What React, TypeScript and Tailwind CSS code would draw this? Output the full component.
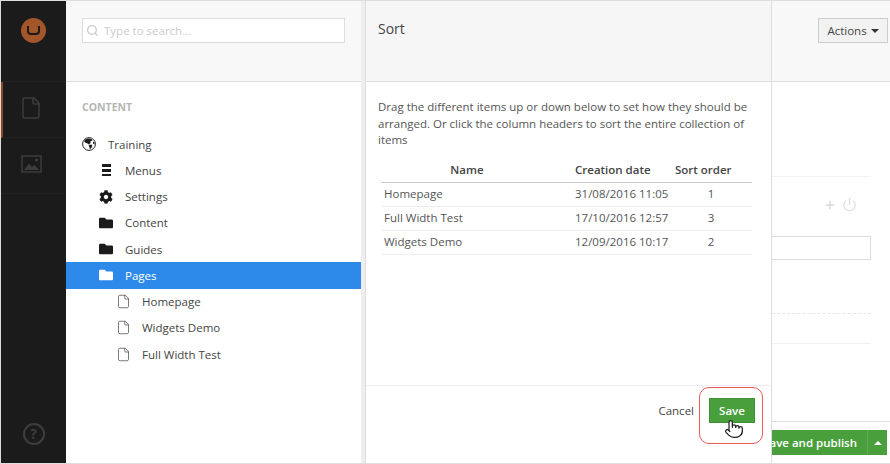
import { File, Pointer, Power, Plus, Search } from 'lucide-react';
import { FaCog, FaFolder } from 'react-icons/fa';

const ROWS = [
  { name: 'Homepage', date: '31/08/2016 11:05', order: 1 },
  { name: 'Full Width Test', date: '17/10/2016 12:57', order: 3 },
  { name: 'Widgets Demo', date: '12/09/2016 10:17', order: 2 },
];

function MenuIcon() {
  return (
    <span className="flex h-[12px] w-[9px] flex-col justify-between">
      <span className="h-[2.5px] bg-[#1b1b1b]" />
      <span className="h-[2.5px] bg-[#1b1b1b]" />
      <span className="h-[2.5px] bg-[#1b1b1b]" />
    </span>
  );
}

function GlobeIcon() {
  return (
    <svg width="14" height="14" viewBox="0 0 14 14">
      <circle cx="7" cy="7" r="6.4" fill="none" stroke="#222" strokeWidth="1" />
      <path d="M3 2.6 6.2 1.6 9.6 2 10.4 3.4 8.4 4.2 8.6 6 6.6 7.6 5.6 6.6 3.4 5.8 2.2 4.4Z" fill="#1b1b1b" />
      <path d="M6.6 8 9.4 7.6 10.4 9 9 11.6 7.8 12 7.4 10Z" fill="#1b1b1b" />
      <path d="M11 4.6 12.6 5.4 12.4 7.4 11 6.6Z" fill="#1b1b1b" />
    </svg>
  );
}

function PictureIcon() {
  return (
    <svg width="21" height="18" viewBox="0 0 21 18" fill="none">
      <rect x="1" y="1" width="19" height="16" stroke="#3d3d3d" strokeWidth="1.5" />
      <path d="M3 15 8 8.5 11 12 13.5 10 18 15Z" fill="#3d3d3d" />
      <circle cx="15.5" cy="5" r="1.6" fill="#3d3d3d" />
    </svg>
  );
}

function TreeRow({ icon, label, indent, active }: { icon: React.ReactNode; label: string; indent: string; active?: boolean }) {
  return (
    <div className={`flex h-[26.25px] items-center ${indent} ${active ? 'bg-[#2e8aea] text-white' : 'text-[#444]'}`}>
      <span className={`flex w-[16px] shrink-0 justify-center ${active ? 'text-white' : 'text-[#1b1b1b]'}`}>{icon}</span>
      <span className="ml-[11px]">{label}</span>
    </div>
  );
}

function Sidebar() {
  return (
    <div className="flex w-[65px] shrink-0 flex-col bg-[#1b1b1b]">
      <div className="flex h-[81px] shrink-0 items-start justify-center border-b border-[#222] pt-[17px]">
        <div className="flex h-[25px] w-[25px] items-center justify-center rounded-full bg-[#a3562a]">
          <div className="h-[9px] w-[13px] rounded-b-[4px] border-x-2 border-b-2 border-[#1b1b1b]" />
        </div>
      </div>
      <div className="flex h-[56px] shrink-0 items-center border-b border-[#222] border-l-2 border-l-[#8a4a26] pb-[4px] pl-[16px]">
        <File size={24} strokeWidth={1.5} className="text-[#3d3d3d]" />
      </div>
      <div className="flex h-[56px] shrink-0 items-center border-b border-[#222] pb-[4px] pl-[20px]">
        <PictureIcon />
      </div>
      <div className="flex flex-1 items-end justify-center pb-[18px]">
        <div className="flex h-[22px] w-[22px] items-center justify-center rounded-full border-2 border-[#3d3d3d] text-[14px] font-bold leading-none text-[#3d3d3d]">?</div>
      </div>
    </div>
  );
}

function TreePanel() {
  const file = <File size={15} strokeWidth={1.25} className="text-[#555]" />;
  return (
    <div className="flex w-[295px] shrink-0 flex-col bg-white">
      <div className="flex h-[81px] shrink-0 items-start border-b border-[#ddd] bg-[#f8f8f8] px-[16px] pt-[17px]">
        <div className="flex h-[25px] w-[263px] items-center border border-[#ddd] bg-white pl-[3px] text-[11.5px] text-[#ccc]">
          <Search size={13} strokeWidth={2.5} className="text-[#ccc]" />
          <span className="ml-[5px]">Type to search...</span>
        </div>
      </div>
      <div className="px-[16px] pt-[17px] text-[10.5px] font-bold leading-[16px] text-[#b5b5b5]">CONTENT</div>
      <div className="mt-[16px] text-[11.5px]">
        <TreeRow icon={<GlobeIcon />} label="Training" indent="pl-[15px]" />
        <TreeRow icon={<MenuIcon />} label="Menus" indent="pl-[32px]" />
        <TreeRow icon={<FaCog size={14} />} label="Settings" indent="pl-[32px]" />
        <TreeRow icon={<FaFolder size={14} />} label="Content" indent="pl-[32px]" />
        <TreeRow icon={<FaFolder size={14} />} label="Guides" indent="pl-[32px]" />
        <TreeRow icon={<FaFolder size={14} />} label="Pages" indent="pl-[32px]" active />
        <TreeRow icon={file} label="Homepage" indent="pl-[49px]" />
        <TreeRow icon={file} label="Widgets Demo" indent="pl-[49px]" />
        <TreeRow icon={file} label="Full Width Test" indent="pl-[49px]" />
      </div>
    </div>
  );
}

function SortDialog() {
  return (
    <div className="flex w-[407px] shrink-0 flex-col border-x border-[#ddd] bg-white">
      <div className="h-[81px] shrink-0 border-b border-[#ddd] bg-[#f6f6f6] px-[12px] pt-[18px] text-[14px] leading-[20px] text-[#444]">Sort</div>
      <div className="flex-1 px-[12px] pt-[17px] text-[11.5px] text-[#555]">
        <p className="leading-[16.5px]">Drag the different items up or down below to set how they should be arranged. Or click the column headers to sort the entire collection of items</p>
        <div className="ml-[3px] mt-[10px] w-[371px]">
          <div className="flex h-[24px] items-center border-b border-[#ccc] font-semibold text-[#444]">
            <div className="w-[194px] pr-[22px] text-center">Name</div>
            <div className="w-[100px]">Creation date</div>
            <div className="w-[77px]">Sort order</div>
          </div>
          {ROWS.map((row) => (
            <div key={row.name} className="flex h-[24px] items-center border-b border-[#eee]">
              <div className="w-[194px] pl-[3px]">{row.name}</div>
              <div className="w-[100px]">{row.date}</div>
              <div className="w-[77px] pr-[5px] text-center">{row.order}</div>
            </div>
          ))}
        </div>
      </div>
      <div className="flex h-[78px] shrink-0 items-start justify-end border-t border-[#eee] pr-[16px] pt-[12px]">
        <div className="mr-[15px] flex h-[25px] items-center text-[11.5px] text-[#444]">Cancel</div>
        <div className="flex h-[25px] w-[46px] items-center justify-center border border-[#3f8f35] bg-[#4a9f3d] text-[11.5px] font-semibold text-white">Save</div>
      </div>
    </div>
  );
}

function ContentPanel() {
  return (
    <div className="flex min-w-0 flex-1 flex-col overflow-hidden bg-white">
      <div className="flex h-[81px] shrink-0 items-start justify-end border-b border-[#ddd] bg-[#f8f8f8] pr-[2px] pt-[17px]">
        <div className="flex h-[25px] w-[70px] items-center justify-center gap-[4px] border border-[#ccc] bg-[#f2f2f2] text-[11.5px] text-[#444]">
          Actions
          <span className="h-0 w-0 border-x-[4px] border-t-[4px] border-x-transparent border-t-[#333]" />
        </div>
      </div>
      <div className="flex-1 pr-[19px]">
        <div className="mt-[94px] h-[1px] bg-[#f3f3f3]" />
        <div className="mt-[20px] flex items-center justify-end gap-[6px] pr-[14px] text-[#ddd]">
          <Plus size={12} strokeWidth={3.5} />
          <Power size={15} strokeWidth={2} />
        </div>
        <div className="mt-[24px] h-[24px] border border-l-0 border-[#ddd]" />
        <div className="mt-[53px] border-b border-dashed border-[#e5e5e5]" />
        <div className="mt-[29px] h-[1px] bg-[#f0f0f0]" />
      </div>
      <div className="flex h-[42px] shrink-0 items-start justify-end overflow-hidden border-t border-[#ddd] bg-white pr-[3px] pt-[8px]">
        <div className="flex h-[25px] shrink-0 items-center whitespace-nowrap bg-[#4a9f3d] text-[11.5px] font-semibold text-white">
          <span className="px-[10px]">Save and publish</span>
          <span className="flex h-full w-[20px] items-center justify-center border-l border-[#5fae52]">
            <span className="h-0 w-0 border-x-[4px] border-b-[4px] border-x-transparent border-b-white" />
          </span>
        </div>
      </div>
    </div>
  );
}

export default function App() {
  return (
    <div className='relative flex h-[464px] w-[890px] overflow-hidden border-y border-l border-[#ddd] bg-[#e9e9e9] font-["Open_Sans",sans-serif]'>
      <Sidebar />
      <TreePanel />
      <div className="w-[4px] shrink-0 bg-[#eee]" />
      <SortDialog />
      <ContentPanel />
      {/* callout over the save button */}
      <div className="absolute left-[698px] top-[386px] h-[57px] w-[64px] rounded-[10px] border-[1.5px] border-[#ee5a5a]" />
      <Pointer size={20} strokeWidth={1.5} fill="white" className="absolute left-[723px] top-[418px] text-[#222]" />
    </div>
  );
}
